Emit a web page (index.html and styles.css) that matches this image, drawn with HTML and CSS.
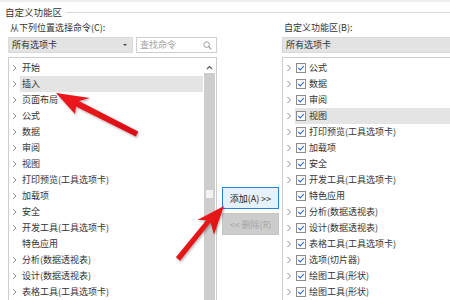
FILE: index.html
```html
<!DOCTYPE html>
<html lang="zh-CN">
<head>
<meta charset="utf-8">
<link rel="stylesheet" href="styles.css">
</head>
<body>
<svg class="defs" width="0" height="0" aria-hidden="true">
  <defs>
    <symbol id="chev" viewBox="0 0 6 8"><polyline points="1.5,1 4.5,4 1.5,7" fill="none" stroke="#8a8a8a" stroke-width="1"/></symbol>
    <symbol id="cb" viewBox="0 0 10 10"><rect x="0.5" y="0.5" width="9" height="9" fill="#fff" stroke="#8c8c8c"/><polyline points="2.3,5 4.2,6.9 7.8,3.2" fill="none" stroke="#2f6fcf" stroke-width="1.1"/></symbol>
  </defs>
</svg>
<div class="app">
  <div class="group-title"><span>自定义功能区</span><span class="rule"></span></div>
  <div class="cols">
    <div class="col left">
      <div class="label">从下列位置选择命令(C):</div>
      <div class="controls">
        <div class="select"><span>所有选项卡</span><span class="caret"></span></div>
        <div class="search"><span>查找命令</span>
          <svg class="mag" width="9" height="9" viewBox="0 0 9 9"><circle cx="3.6" cy="3.6" r="2.8" fill="none" stroke="#9a9a9a" stroke-width="1"/><line x1="5.6" y1="5.6" x2="8.3" y2="8.3" stroke="#9a9a9a" stroke-width="1.2"/></svg>
        </div>
      </div>
      <div class="listbox">
        <div class="items">
          <div class="item"><svg class="chev"><use href="#chev"/></svg><span class="name">开始</span></div>
          <div class="item sel"><svg class="chev"><use href="#chev"/></svg><span class="name">插入</span></div>
          <div class="item"><svg class="chev"><use href="#chev"/></svg><span class="name">页面布局</span></div>
          <div class="item"><svg class="chev"><use href="#chev"/></svg><span class="name">公式</span></div>
          <div class="item"><svg class="chev"><use href="#chev"/></svg><span class="name">数据</span></div>
          <div class="item"><svg class="chev"><use href="#chev"/></svg><span class="name">审阅</span></div>
          <div class="item"><svg class="chev"><use href="#chev"/></svg><span class="name">视图</span></div>
          <div class="item"><svg class="chev"><use href="#chev"/></svg><span class="name">打印预览(工具选项卡)</span></div>
          <div class="item"><svg class="chev"><use href="#chev"/></svg><span class="name">加载项</span></div>
          <div class="item"><svg class="chev"><use href="#chev"/></svg><span class="name">安全</span></div>
          <div class="item"><svg class="chev"><use href="#chev"/></svg><span class="name">开发工具(工具选项卡)</span></div>
          <div class="item"><span class="chev"></span><span class="name">特色应用</span></div>
          <div class="item"><svg class="chev"><use href="#chev"/></svg><span class="name">分析(数据透视表)</span></div>
          <div class="item"><svg class="chev"><use href="#chev"/></svg><span class="name">设计(数据透视表)</span></div>
          <div class="item"><svg class="chev"><use href="#chev"/></svg><span class="name">表格工具(工具选项卡)</span></div>
        </div>
        <div class="scrollbar">
          <div class="sb-up"><svg width="7" height="5" viewBox="0 0 7 5"><polyline points="1,4 3.5,1.5 6,4" fill="none" stroke="#555" stroke-width="1.1"/></svg></div>
          <div class="sb-track"><span class="sb-mark"></span></div>
        </div>
      </div>
    </div>
    <div class="col mid">
      <button class="btn add">添加(A) &gt;&gt;</button>
      <button class="btn del" disabled>&lt;&lt; 删除(R)</button>
    </div>
    <div class="col right">
      <div class="label rlabel">自定义功能区(B):</div>
      <div class="controls">
        <div class="select wide"><span>所有选项卡</span></div>
      </div>
      <div class="listbox">
        <div class="items">
          <div class="item"><svg class="chev rc"><use href="#chev"/></svg><span class="name"><svg class="cb"><use href="#cb"/></svg>公式</span></div>
          <div class="item"><svg class="chev rc"><use href="#chev"/></svg><span class="name"><svg class="cb"><use href="#cb"/></svg>数据</span></div>
          <div class="item"><svg class="chev rc"><use href="#chev"/></svg><span class="name"><svg class="cb"><use href="#cb"/></svg>审阅</span></div>
          <div class="item sel"><svg class="chev rc"><use href="#chev"/></svg><span class="name"><svg class="cb"><use href="#cb"/></svg>视图</span></div>
          <div class="item"><svg class="chev rc"><use href="#chev"/></svg><span class="name"><svg class="cb"><use href="#cb"/></svg>打印预览(工具选项卡)</span></div>
          <div class="item"><svg class="chev rc"><use href="#chev"/></svg><span class="name"><svg class="cb"><use href="#cb"/></svg>加载项</span></div>
          <div class="item"><svg class="chev rc"><use href="#chev"/></svg><span class="name"><svg class="cb"><use href="#cb"/></svg>安全</span></div>
          <div class="item"><svg class="chev rc"><use href="#chev"/></svg><span class="name"><svg class="cb"><use href="#cb"/></svg>开发工具(工具选项卡)</span></div>
          <div class="item"><span class="chev rc"></span><span class="name"><svg class="cb"><use href="#cb"/></svg>特色应用</span></div>
          <div class="item"><svg class="chev rc"><use href="#chev"/></svg><span class="name"><svg class="cb"><use href="#cb"/></svg>分析(数据透视表)</span></div>
          <div class="item"><svg class="chev rc"><use href="#chev"/></svg><span class="name"><svg class="cb"><use href="#cb"/></svg>设计(数据透视表)</span></div>
          <div class="item"><svg class="chev rc"><use href="#chev"/></svg><span class="name"><svg class="cb"><use href="#cb"/></svg>表格工具(工具选项卡)</span></div>
          <div class="item"><svg class="chev rc"><use href="#chev"/></svg><span class="name"><svg class="cb"><use href="#cb"/></svg>选项(切片器)</span></div>
          <div class="item"><svg class="chev rc"><use href="#chev"/></svg><span class="name"><svg class="cb"><use href="#cb"/></svg>绘图工具(形状)</span></div>
          <div class="item"><svg class="chev rc"><use href="#chev"/></svg><span class="name"><svg class="cb"><use href="#cb"/></svg>绘图工具(形状)</span></div>
        </div>
      </div>
    </div>
  </div>
  <svg class="arrows" width="450" height="300" viewBox="0 0 450 300">
    <defs>
      <filter id="sh" x="-20%" y="-20%" width="140%" height="140%">
        <feDropShadow dx="1" dy="1.5" stdDeviation="1.2" flood-color="#000" flood-opacity="0.3"/>
      </filter>
      <linearGradient id="rg" x1="0" y1="0" x2="1" y2="1">
        <stop offset="0" stop-color="#f0161c"/>
        <stop offset="1" stop-color="#d80f16"/>
      </linearGradient>
    </defs>
    <polygon filter="url(#sh)" fill="url(#rg)" points="56,93 90,98 78.9,100.9 138.3,131.5 135.8,136.5 76,106.6 75,114"/>
    <polygon filter="url(#sh)" fill="url(#rg)" points="224,206 214,234.4 210.6,222.5 180.1,260.8 175.9,257.2 206.4,219.9 197.4,219.9"/>
  </svg>
</div>
</body>
</html>
```

FILE: styles.css
```css
* { box-sizing: border-box; }
html, body { margin: 0; padding: 0; background: #fff; }
body {
  font-family: "Noto Sans CJK SC", "Noto Sans", sans-serif;
  font-size: 9px;
  color: #333;
}
.defs { position: absolute; width: 0; height: 0; }
.app {
  position: relative;
  width: 450px;
  height: 300px;
  overflow: hidden;
  border-top: 2px solid #efefef;
}
.group-title {
  display: flex;
  align-items: center;
  height: 16px;
  margin-top: 2px;
  padding-left: 5px;
  gap: 4px;
  line-height: 16px;
  font-size: 9.5px;
}
.rule { flex: 1; height: 1px; background: #d6d6d6; }
.cols {
  display: grid;
  grid-template-columns: 209px 65px 180px;
  margin-left: 8px;
}
.label {
  height: 16px;
  line-height: 16px;
  padding-left: 2px;
}
.rlabel { padding-left: 2px; }
.controls {
  display: flex;
  gap: 3px;
  margin-top: 1px;
  height: 16px;
}
.select {
  width: 125px;
  height: 16px;
  background: #e3e3e3;
  border: 1px solid #d9d9d9;
  display: flex;
  align-items: center;
  justify-content: space-between;
  padding: 0 5px 0 3px;
  line-height: 14px;
}
.select.wide { width: 180px; }
.caret {
  width: 0; height: 0;
  border-left: 2px solid transparent;
  border-right: 2px solid transparent;
  border-top: 2px solid #444;
}
.search {
  flex: 1;
  height: 16px;
  border: 1px solid #cfcfcf;
  background: #fff;
  display: flex;
  align-items: center;
  justify-content: space-between;
  padding: 0 4px 0 3px;
  color: #a3a3a3;
  line-height: 14px;
}
.listbox {
  margin-top: 4px;
  height: 250px;
  border: 1px solid #cdcdcd;
  display: flex;
  background: #fff;
}
.items { flex: 1; padding-top: 2px; }
.item {
  display: flex;
  align-items: center;
  height: 16px;
  line-height: 16px;
  white-space: nowrap;
}
.chev { width: 11px; height: 8px; flex: none; display: block; }
.chev.rc { width: 12px; }
.name {
  flex: 1;
  padding-left: 2px;
  height: 16px;
  display: flex;
  align-items: center;
}
.item.sel .name { background: #e4e4e4; }
.right .name { padding-left: 1px; }
.cb { width: 10px; height: 10px; flex: none; margin-right: 3px; }
.scrollbar {
  width: 13px;
  flex: none;
  display: flex;
  flex-direction: column;
}
.sb-up {
  height: 15px;
  display: flex;
  align-items: center;
  justify-content: center;
  padding-top: 3px;
}
.sb-track {
  flex: 1;
  background: #cdcdcd;
  margin: 0 1px;
  display: flex;
  justify-content: center;
  padding-top: 117px;
}
.sb-mark { width: 7px; height: 8px; background: #f2f2f2; }
.mid {
  padding: 167px 3px 0 5px;
  display: flex;
  flex-direction: column;
  gap: 4px;
}
.btn {
  width: 57px;
  height: 22px;
  font: inherit;
  font-size: 9px;
  padding: 0;
  margin: 0;
  white-space: nowrap;
}
.btn.add {
  background: #e5f1fb;
  border: 1px solid #2b7fd4;
  color: #222;
}
.btn.del {
  background: #cccccc;
  border: 1px solid #c4c4c4;
  color: #a6a6a6;
}
.arrows {
  position: absolute;
  left: 0;
  top: -2px;
  pointer-events: none;
}
```
